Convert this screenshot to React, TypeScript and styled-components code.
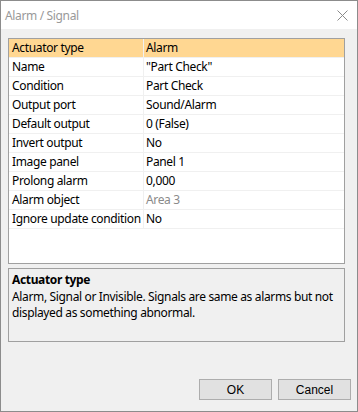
import React from "react";
import styled, { createGlobalStyle } from "styled-components";

const Global = createGlobalStyle`
  html, body { margin: 0; padding: 0; background: #ffffff; }
  body { font-family: "Noto Sans", "Segoe UI", sans-serif; }
`;

const Window = styled.div`
  width: 358px;
  height: 412px;
  box-sizing: border-box;
  border: 1px solid #8c8c8c;
  background: #f0f0f0;
  display: flex;
  flex-direction: column;
  font-family: "Noto Sans", sans-serif;
  font-size: 12px;
  letter-spacing: -0.35px;
  color: #000;
`;

const TitleBar = styled.div`
  height: 28px;
  background: #ffffff;
  display: flex;
  align-items: center;
  justify-content: space-between;
  padding: 0 9px 0 4px;
  flex-shrink: 0;
`;

const Title = styled.span`
  color: #999999;
  font-size: 12px;
`;

const CloseIcon = styled.svg`
  width: 11px;
  height: 11px;
  display: block;
`;

const Body = styled.div`
  flex: 1;
  display: flex;
  flex-direction: column;
  padding: 9px 12px 0 7px;
`;

const Grid = styled.div`
  height: 226px;
  box-sizing: border-box;
  border: 1px solid #a0a0a0;
  background: #ffffff;
  display: flex;
  flex-direction: column;
`;

const Row = styled.div<{ $selected?: boolean }>`
  display: grid;
  grid-template-columns: 135px 1fr;
  height: 19px;
  box-sizing: border-box;
  border-bottom: 1px solid #f0f0f0;
  background: ${(p) => (p.$selected ? "#ffd792" : "#ffffff")};
`;

const NameCell = styled.div`
  border-right: 1px solid #f0f0f0;
  padding-left: 3px;
  line-height: 18px;
  white-space: nowrap;
  overflow: hidden;
`;

const ValueCell = styled.div<{ $disabled?: boolean }>`
  padding-left: 2px;
  line-height: 18px;
  white-space: nowrap;
  color: ${(p) => (p.$disabled ? "#8a8a8a" : "#000")};
`;

const Description = styled.div`
  margin-top: 4px;
  height: 74px;
  box-sizing: border-box;
  border: 1px solid #a0a0a0;
  padding: 3px 3px;
  line-height: 16px;
`;

const DescTitle = styled.div`
  font-weight: bold;
  margin-bottom: 1px;
`;

const DescText = styled.div``;

const Footer = styled.div`
  display: flex;
  justify-content: flex-end;
  gap: 6px;
  padding: 37px 6px 0 0;
  margin-right: -12px;
`;

const Button = styled.button`
  width: 73px;
  height: 21px;
  box-sizing: border-box;
  border: 1px solid #adadad;
  background: #e1e1e1;
  font-family: "Liberation Sans", sans-serif;
  font-size: 12px;
  color: #000;
  padding: 0;
`;

const rows: { name: string; value: string; disabled?: boolean }[] = [
  { name: "Actuator type", value: "Alarm" },
  { name: "Name", value: '"Part Check"' },
  { name: "Condition", value: "Part Check" },
  { name: "Output port", value: "Sound/Alarm" },
  { name: "Default output", value: "0 (False)" },
  { name: "Invert output", value: "No" },
  { name: "Image panel", value: "Panel 1" },
  { name: "Prolong alarm", value: "0,000" },
  { name: "Alarm object", value: "Area 3", disabled: true },
  { name: "Ignore update condition", value: "No" },
];

export default function App() {
  return (
    <>
      <Global />
      <Window>
        <TitleBar>
          <Title>Alarm / Signal</Title>
          <CloseIcon viewBox="0 0 11 11">
            <path d="M0.5 0.5 L10.5 10.5 M10.5 0.5 L0.5 10.5" stroke="#8a8a8a" strokeWidth="1" fill="none" />
          </CloseIcon>
        </TitleBar>
        <Body>
          <Grid>
            {rows.map((r, i) => (
              <Row key={r.name} $selected={i === 0}>
                <NameCell>{r.name}</NameCell>
                <ValueCell $disabled={r.disabled}>{r.value}</ValueCell>
              </Row>
            ))}
          </Grid>
          <Description>
            <DescTitle>Actuator type</DescTitle>
            <DescText>
              Alarm, Signal or Invisible. Signals are same as alarms but not displayed as something abnormal.
            </DescText>
          </Description>
          <Footer>
            <Button>OK</Button>
            <Button>Cancel</Button>
          </Footer>
        </Body>
      </Window>
    </>
  );
}
